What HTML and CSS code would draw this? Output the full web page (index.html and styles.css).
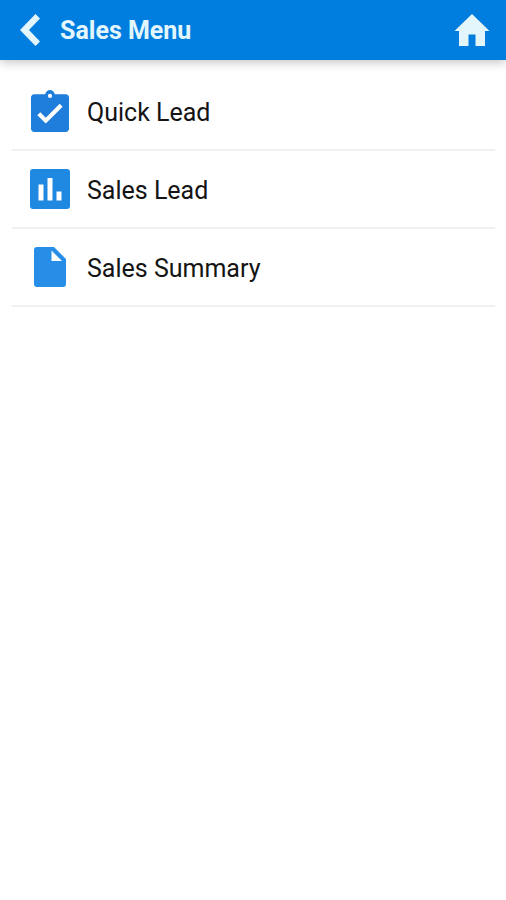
FILE: index.html
```html
<!DOCTYPE html>
<html lang="en">
<head>
<meta charset="utf-8">
<meta name="viewport" content="width=device-width, initial-scale=1">
<title>Sales Menu</title>
<link rel="stylesheet" href="styles.css">
</head>
<body>
<header class="bar">
  <button class="bar-button" type="button" aria-label="Back">
    <svg class="back-icon" viewBox="0 0 20 32"><path d="M15.500 0 20 4.500 9 16l11 11.500-4.500 4.500L0 16z"/></svg>
  </button>
  <h1 class="title">Sales Menu</h1>
  <a class="home" href="#" aria-label="Home">
    <svg class="home-icon" viewBox="0 0 36 32"><path d="M18 0 .5 17H5v15h9.500V20.500h7V32H31V17h4.500z"/></svg>
  </a>
</header>
<nav class="menu">
  <a class="item" href="#">
    <svg class="icon clipboard" viewBox="3 1 18 20" preserveAspectRatio="none"><path fill-rule="evenodd" d="M19.500 3h-5.200C14 1.800 13.100 1 12 1s-2 .8-2.300 2H4.500C3.700 3 3 3.700 3 4.500v15c0 .8.700 1.500 1.500 1.500h15c.8 0 1.500-.7 1.500-1.500v-15c0-.8-.7-1.500-1.500-1.500zM12 2.800a1 1 0 1 1 0 2 1 1 0 0 1 0-2zM10 17l-4-4 1.410-1.410L10 14.170l6.590-6.590L18 9l-8 8z"/></svg>
    <span class="label">Quick Lead</span>
  </a>
  <a class="item" href="#">
    <svg class="icon chart" viewBox="0 0 40 40"><path fill-rule="evenodd" d="M3 0h34a3 3 0 0 1 3 3v34a3 3 0 0 1-3 3H3a3 3 0 0 1-3-3V3a3 3 0 0 1 3-3zM8.500 15.500v16h5v-16zM17.500 9v22.500h5V9zM26.500 22.500v9h5v-9z"/></svg>
    <span class="label">Sales Lead</span>
  </a>
  <a class="item" href="#">
    <svg class="icon file" viewBox="0 0 32 40"><path fill-rule="evenodd" d="M3 0h17l12 12v25a3 3 0 0 1-3 3H3a3 3 0 0 1-3-3V3a3 3 0 0 1 3-3zM17.500 3.500V14H28z"/></svg>
    <span class="label">Sales Summary</span>
  </a>
</nav>
</body>
</html>
```
FILE: styles.css
```css
* { box-sizing: border-box; }
body { margin: 0; background: #fff; color: #141414; font-family: Roboto, sans-serif; }
svg { display: block; fill: currentColor; }
.bar { display: flex; align-items: center; height: 60px; padding: 0 16px 0 20px; background: #007ee0; color: #e3f6fc; box-shadow: 0 2px 10px rgba(0, 0, 0, .25); }
.bar-button { width: 40px; padding: 0; border: 0; background: none; color: inherit; }
.back-icon { width: 20px; height: 32px; }
.title { flex: 1; margin: 0; padding-top: 2px; font-size: 25px; line-height: 32px; font-weight: 700; }
.home { color: inherit; }
.home-icon { width: 36px; height: 32px; }
.menu { padding: 13px 11px 0 12px; }
.item { display: grid; grid-template-columns: 40px 1fr; align-items: center; column-gap: 17px; height: 78px; padding: 0 18px; border-bottom: 2px solid #f0f0f0; color: inherit; text-decoration: none; }
.icon { justify-self: center; }
.clipboard { width: 38px; height: 42px; color: #1f7edb; }
.chart { width: 40px; height: 40px; color: #1f88e0; }
.file { width: 32px; height: 40px; color: #268ee6; }
.label { padding-top: 4px; font-size: 25px; line-height: 32px; }
```
